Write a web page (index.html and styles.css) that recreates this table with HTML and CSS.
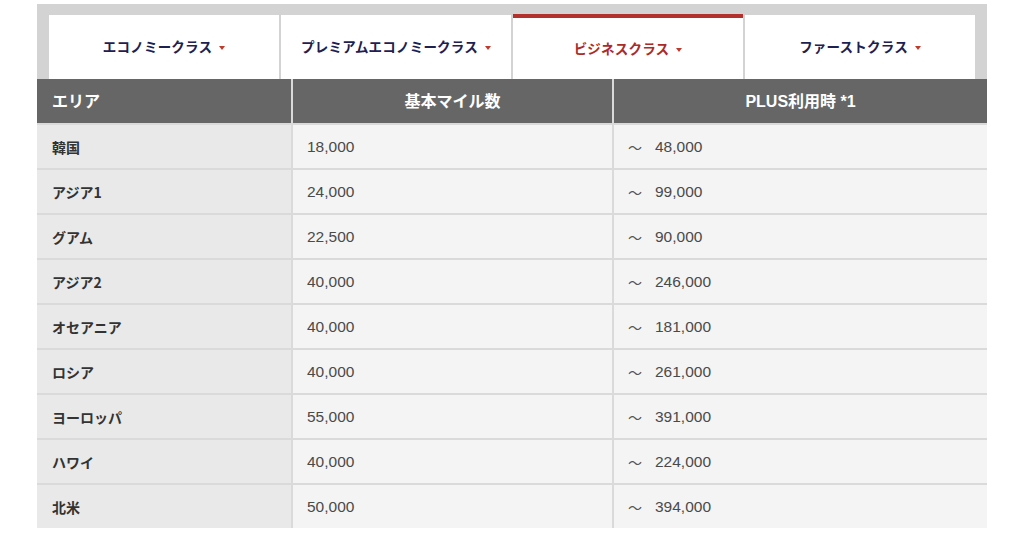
FILE: index.html
```html
<!DOCTYPE html>
<html lang="ja">
<head>
<meta charset="utf-8">
<title>必要マイル数</title>
<link rel="stylesheet" href="styles.css">
</head>
<body>
<div class="wrap">
  <div class="tabs">
    <div class="tab">エコノミークラス<span class="caret"></span></div>
    <div class="tab">プレミアムエコノミークラス<span class="caret"></span></div>
    <div class="tab active">ビジネスクラス<span class="caret"></span></div>
    <div class="tab">ファーストクラス<span class="caret"></span></div>
  </div>
  <div class="grid">
    <div class="th th-left">エリア</div>
    <div class="th">基本マイル数</div>
    <div class="th">PLUS利用時 *1</div>

    <div class="area">韓国</div><div class="val">18,000</div><div class="val plus"><span class="wave">〜</span>48,000</div>
    <div class="area">アジア1</div><div class="val">24,000</div><div class="val plus"><span class="wave">〜</span>99,000</div>
    <div class="area">グアム</div><div class="val">22,500</div><div class="val plus"><span class="wave">〜</span>90,000</div>
    <div class="area">アジア2</div><div class="val">40,000</div><div class="val plus"><span class="wave">〜</span>246,000</div>
    <div class="area">オセアニア</div><div class="val">40,000</div><div class="val plus"><span class="wave">〜</span>181,000</div>
    <div class="area">ロシア</div><div class="val">40,000</div><div class="val plus"><span class="wave">〜</span>261,000</div>
    <div class="area">ヨーロッパ</div><div class="val">55,000</div><div class="val plus"><span class="wave">〜</span>391,000</div>
    <div class="area">ハワイ</div><div class="val">40,000</div><div class="val plus"><span class="wave">〜</span>224,000</div>
    <div class="area">北米</div><div class="val">50,000</div><div class="val plus"><span class="wave">〜</span>394,000</div>
  </div>
</div>
</body>
</html>
```

FILE: styles.css
```css
html, body {
  margin: 0;
  padding: 0;
  background: #ffffff;
}
body {
  font-family: "Liberation Sans", "Noto Sans CJK JP", sans-serif;
  color: #333333;
}
.wrap {
  width: 950px;
  margin: 4px auto 0;
}
.tabs {
  display: flex;
  gap: 2px;
  background: #d3d3d3;
  padding: 11px 12px 0;
  height: 64px;
}
.tab {
  flex: 1;
  background: #ffffff;
  display: flex;
  align-items: center;
  justify-content: center;
  padding-bottom: 3px;
  font-family: "Noto Sans CJK JP", sans-serif;
  font-size: 13.5px;
  font-weight: 700;
  color: #1d2150;
  letter-spacing: 0.2px;
}
.tab.active {
  color: #ab2b28;
  border-top: 4px solid #b3312c;
  margin-top: -1px;
  padding-top: 0;
  padding-bottom: 2px;
}
.caret {
  display: inline-block;
  width: 0;
  height: 0;
  margin-left: 7px;
  margin-top: 4px;
  border-left: 3.5px solid transparent;
  border-right: 3.5px solid transparent;
  border-top: 4px solid #c0392b;
}
.grid {
  display: grid;
  grid-template-columns: 254px 319px 1fr;
  grid-template-rows: 44px repeat(9, 43px);
  gap: 2px;
  background: #dadada;
}
.th {
  background: #666666;
  color: #ffffff;
  font-size: 16px;
  font-weight: 700;
  display: flex;
  align-items: center;
  justify-content: center;
  padding-bottom: 2px;
}
.th-left {
  justify-content: flex-start;
  padding-left: 15px;
}
.area {
  background: #e9e9e9;
  font-family: "Noto Sans CJK JP", sans-serif;
  font-size: 14px;
  font-weight: 700;
  color: #333333;
  display: flex;
  align-items: center;
  padding-left: 15px;
}
.val {
  background: #f4f4f4;
  font-size: 15.5px;
  color: #4a4a4a;
  display: flex;
  align-items: center;
  padding-left: 14px;
}
.plus {
  padding-left: 14px;
}
.wave {
  font-family: "Noto Sans CJK JP", sans-serif;
  font-size: 14px;
  color: #555555;
  margin-right: 13px;
}
```
